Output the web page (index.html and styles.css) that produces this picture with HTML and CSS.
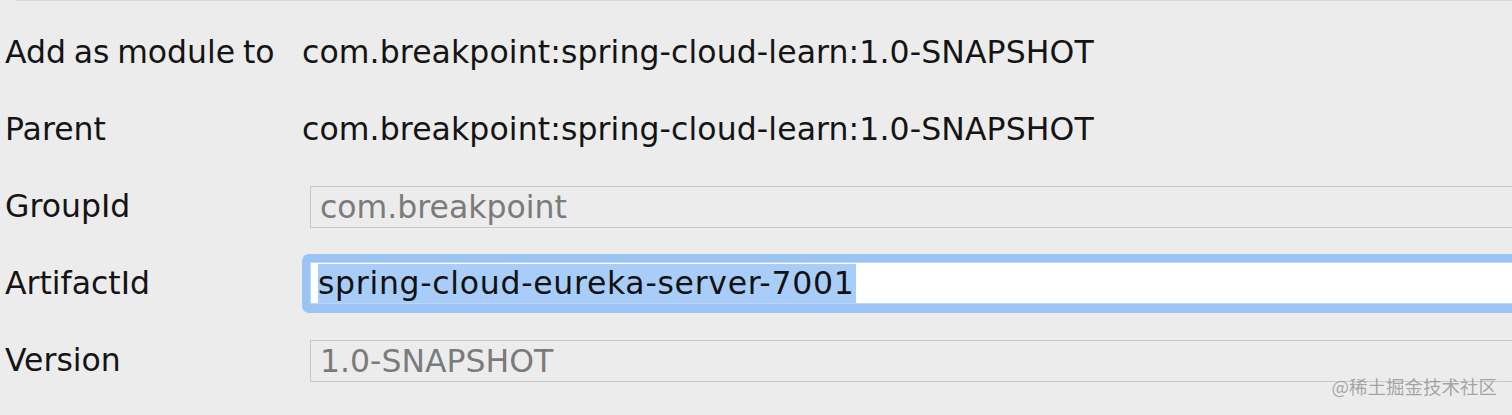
FILE: index.html
```html
<!DOCTYPE html>
<html>
<head>
<meta charset="utf-8">
<link rel="stylesheet" href="styles.css">
</head>
<body>
<div class="page">
  <div class="topline"></div>
  <div class="form">
    <div class="label">Add as module to</div>
    <div class="value">com.breakpoint:spring-cloud-learn:1.0-SNAPSHOT</div>

    <div class="label">Parent</div>
    <div class="value">com.breakpoint:spring-cloud-learn:1.0-SNAPSHOT</div>

    <div class="label">GroupId</div>
    <div class="cell"><div class="field disabled">com.breakpoint</div></div>

    <div class="label">ArtifactId</div>
    <div class="cell">
      <div class="ring"><div class="field focused"><span class="sel">spring-cloud-eureka-server-7001</span></div></div>
    </div>

    <div class="label">Version</div>
    <div class="cell"><div class="field disabled">1.0-SNAPSHOT</div></div>
  </div>
  <div class="watermark">@稀土掘金技术社区</div>
</div>
</body>
</html>
```
FILE: styles.css
```css
html, body {
  margin: 0;
  padding: 0;
  background: #ececec;
  overflow: hidden;
}
.page {
  position: relative;
  width: 1512px;
  height: 415px;
  overflow: hidden;
  font-family: "DejaVu Sans", "Liberation Sans", sans-serif;
  font-size: 31.5px;
  color: #141414;
}
.topline {
  height: 1px;
  margin-left: 16px;
  background: #d7d7d7;
}
.form {
  display: grid;
  grid-template-columns: 297px 1fr;
  grid-auto-rows: 77px;
  padding: 13px 0 0 5px;
  align-items: center;
}
.label, .value {
  white-space: nowrap;
  line-height: 37px;
}
.label {
  word-spacing: -2.3px;
}
.value {
  letter-spacing: 0.1px;
}
.cell {
  display: flex;
  align-items: center;
  margin-right: -30px;
}
.field {
  flex: 1;
  box-sizing: border-box;
  height: 42px;
  line-height: 40px;
  white-space: nowrap;
}
.field.disabled {
  margin-left: 8px;
  border: 1px solid #c9c9c9;
  padding-left: 9px;
  color: #7b7b7b;
}
.ring {
  flex: 1;
  display: flex;
  background: #9bc3f4;
  border-radius: 7px;
  padding: 8px 0 9px 8px;
}
.field.focused {
  background: #ffffff;
  border: 1px solid #bcd6f7;
  padding-left: 7px;
  display: flex;
  align-items: center;
}
.sel {
  display: inline-block;
  background: #a8cdf8;
  line-height: 39px;
  height: 39px;
  padding-right: 2px;
  letter-spacing: 0.7px;
  color: #111111;
}
.watermark {
  position: absolute;
  right: 15px;
  bottom: 18px;
  font-family: "Noto Sans CJK SC", sans-serif;
  font-size: 18.5px;
  line-height: 22px;
  color: rgba(140, 140, 140, 0.75);
}
```
